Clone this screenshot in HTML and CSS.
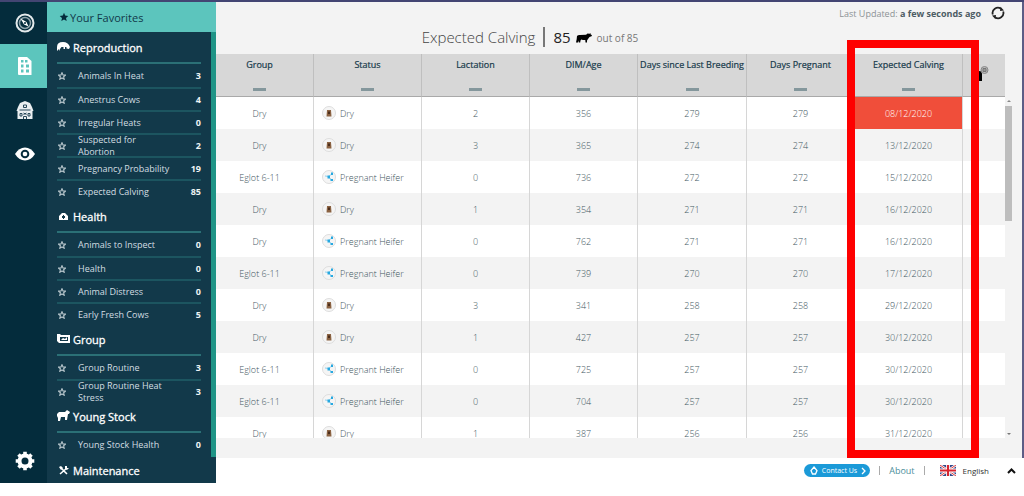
FILE: index.html
```html
<!DOCTYPE html>
<html lang="en">
<head>
<meta charset="utf-8">
<title>Expected Calving</title>
<link rel="stylesheet" href="styles.css">
</head>
<body>
<svg class="defs" aria-hidden="true">
  <symbol id="cow" viewBox="0 0 16 10"><path d="M1 3Q2 1.800 4 2L10 1.800L12 .3L13 1L14.500 0L14.500 1.300L16 2.300L15.500 3.300L13.500 4L12 6L11 7.500V9.500H9.500L9.300 7Q7.500 7.300 5.300 6.500L4.500 7.500L4.200 9.500H2.800L2.700 7.500L2 9.500H0L.7 6Z"/></symbol>
  <symbol id="star" viewBox="0 0 10 10"><path d="M5 .8L6.200 3.600L9.300 3.900L7 5.900L7.700 9L5 7.400L2.300 9L3 5.900L.7 3.900L3.800 3.600Z"/></symbol>
</svg>
<div class="app">
  <nav class="rail" aria-label="Main">
    <button class="rail-btn" aria-label="Dashboard"><svg width="20" height="20" viewBox="0 0 20 20"><circle cx="10" cy="10" r="8.500" fill="none" stroke="#e4eaec" stroke-width="2"/><circle cx="10" cy="10" r="5.500" fill="none" stroke="#8ea2aa" stroke-width="1.500"/><path d="M5.500 5.500L11.500 9L13.500 13.500L9 11.500Z" fill="#fff"/><circle cx="10" cy="10" r="1" fill="#042c3c"/></svg></button>
    <button class="rail-btn active" aria-label="Reports"><svg width="14" height="20" viewBox="0 0 14 20"><path d="M1 1H9L13.500 5V19H1Q0 19 0 18V2Q0 1 1 1Z" fill="#fff"/><path d="M3 4H5.500V6.500H3ZM7 4H9.500V6.500H7ZM3 8.500H5.500V11.500H3ZM8 8.500H11V11.500H8ZM3 13.500H5.500V16.500H3ZM8 13.500H11V16.500H8Z" fill="#5cc5bd"/></svg></button>
    <button class="rail-btn" aria-label="Farm"><svg width="18" height="20" viewBox="0 0 18 20"><path d="M9 1L14 3L16 7L17.500 11H16.500V19H1.500V11H.5L2 7L4 3Z" fill="#e9eef0"/><path d="M7.500 5H10.500V7.500H7.500Z M3.500 10H14.500M4 13.500H6V16H4ZM12 13.500H14V16H12ZM7.500 19V16.500H10.500V19M7.500 13L10.500 14.500M10.500 13L7.500 14.500" fill="none" stroke="#28485a" stroke-width="1"/></svg></button>
    <button class="rail-btn" aria-label="View"><svg width="20" height="14" viewBox="0 0 20 14"><path d="M0 7Q4 .5 10 .5T20 7Q16 13.500 10 13.500T0 7Z" fill="#fff"/><circle cx="10" cy="7" r="4.300" fill="#042c3c"/><circle cx="10" cy="7" r="2.300" fill="#fff"/></svg></button>
    <button class="rail-btn settings" aria-label="Settings"><svg width="20" height="20" viewBox="0 0 20 20"><circle cx="10" cy="10" r="5.500" fill="none" stroke="#fff" stroke-width="4"/><path d="M10 .7V4M10 16V19.300M.7 10H4M16 10H19.300M3.500 3.500L5.700 5.700M14.300 14.300L16.500 16.500M3.500 16.500L5.700 14.300M14.300 5.700L16.500 3.500" stroke="#fff" stroke-width="3.600"/></svg></button>
  </nav>
  <aside class="panel">
    <h2 class="favorites"><svg class="fav-star"><use href="#star"/></svg>Your Favorites</h2>
    <div class="sections" id="sections"></div>
  </aside>
  <main class="main">
    <div class="content">
      <div class="updated"><span>Last Updated: <b>a few seconds ago</b></span>
        <button class="refresh" aria-label="Refresh"><svg width="14" height="14" viewBox="0 0 14 14"><path d="M1.800 8.500A5.300 5.300 0 0 1 10 2.700M12.200 5.500A5.300 5.300 0 0 1 4 11.300" fill="none" stroke="#222" stroke-width="1.800"/><path d="M9.500 .8L13 4.500L9 5ZM4.500 13.200L1 9.500L5 9Z" fill="#222"/></svg></button></div>
      <h1 class="title"><span class="name">Expected Calving</span><span class="count">85</span><svg class="title-cow"><use href="#cow"/></svg><span class="total">out of 85</span></h1>
      <div class="grid">
        <div class="scroller">
          <table>
            <colgroup><col class="c-group"><col class="c-data"><col class="c-data"><col class="c-data"><col class="c-wide"><col class="c-data"><col class="c-data"><col class="c-tag"></colgroup>
            <thead><tr><th>Group</th><th>Status</th><th>Lactation</th><th>DIM/Age</th><th>Days since Last Breeding</th><th>Days Pregnant</th><th>Expected Calving</th><th class="tag"><svg width="20" height="18" viewBox="0 0 20 18"><path d="M3 7Q7 4 10 6Q13 6 13 9V16H10V10L7 9L4 12Z" fill="#000"/><circle cx="15.500" cy="5" r="3.500" fill="#bbb" stroke="#888"/><path d="M14 3.500H17V6.500H14ZM14 5H17" fill="none" stroke="#777"/></svg></th></tr></thead>
            <tbody id="rows"></tbody>
          </table>
        </div>
        <div class="scrollbar"><i class="up"></i><i class="thumb"></i><i class="down"></i></div>
      </div>
      <div class="highlight"></div>
    </div>
    <footer class="footer">
      <button class="contact"><svg width="8" height="9" viewBox="0 0 8 9"><path d="M4 1L7 4.500L5.500 8H2.500L1 4.500Z" fill="none" stroke="#fff" stroke-width="1.300"/></svg>Contact Us<svg width="5" height="8" viewBox="0 0 5 8"><path d="M1 1L4 4L1 7" fill="none" stroke="#fff" stroke-width="1.300"/></svg></button>
      <span class="bar"></span><a class="about" href="#">About</a><span class="bar"></span>
      <button class="lang"><svg width="16" height="11" viewBox="0 0 17 11" preserveAspectRatio="none"><path d="M0 0H17V11H0Z" fill="#34488a"/><path d="M0 0L17 11M17 0L0 11" stroke="#fff" stroke-width="2.400"/><path d="M0 0L17 11M17 0L0 11" stroke="#d33" stroke-width="1"/><path d="M8.500 0V11M0 5.500H17" stroke="#fff" stroke-width="4"/><path d="M8.500 0V11M0 5.500H17" stroke="#d8232f" stroke-width="2.200"/></svg>English</button>
      <button class="expand" aria-label="Expand"><svg width="9" height="6" viewBox="0 0 9 6"><path d="M1 5L4.500 1.500L8 5" fill="none" stroke="#111" stroke-width="2"/></svg></button>
    </footer>
  </main>
</div>
<script src="app.js"></script>
</body>
</html>
```
FILE: styles.css
```css
* { box-sizing: border-box; }
body { margin: 0; background: #fff; font-family: "Open Sans", "Noto Sans", sans-serif; font-size: 9px; color: #3f5761; }
button { border: 0; padding: 0; background: none; font: inherit; color: inherit; display: flex; align-items: center; }
h1, h2, h3, ul { margin: 0; padding: 0; font-weight: 400; }
svg { flex: none; }
.defs { position: absolute; width: 0; height: 0; }
.app { display: flex; height: 100vh; min-height: 320px; padding-bottom: 13px; border-top: 2px solid #434573; }

.rail { width: 47px; flex: none; background: #042c3c; display: flex; flex-direction: column; }
.rail-btn { width: 100%; height: 44px; justify-content: center; padding-left: 2px; }
.rail-btn:first-child { height: 42px; }
.rail-btn.active { background: #5cc5bd; }
.rail-btn.settings { margin-top: auto; }

.panel { width: 169px; flex: none; background: #12394a; display: flex; flex-direction: column; overflow: hidden; color: #d3dee2; }
.favorites { height: 30px; flex: none; padding-left: 12px; background: #5cc5bd; color: #12394a; font-size: 11px; display: flex; align-items: center; gap: 1px; }
.fav-star { width: 10px; height: 10px; fill: #042c3c; }
.sections { padding: 1px 10px 0; position: relative; flex: 1; min-height: 0; }
.sections::after { content: ""; position: absolute; right: 0; top: 0; bottom: 26px; width: 5px; background: #1f9486; }
.section h3 { height: 31px; display: flex; align-items: center; gap: 3px; border-bottom: 2px solid #2b7076; font-size: 11px; color: #fff; -webkit-text-stroke: 0.3px #fff; }
.section ul, .section h3 { width: 144px; }
.section ul { list-style: none; }
.section li { height: 23px; display: flex; align-items: center; border-top: 2px solid #1c5560; line-height: 12px; }
.section li:first-child { border-top: 0; }
.sec-icon { width: 13px; height: 13px; fill: #fff; }
.star { width: 8px; height: 8px; margin: 0 12px 0 1px; fill: none; stroke: #b4c3c9; stroke-width: 1.4px; }
.label { flex: 1; padding-right: 32px; }
.label.long { padding-right: 12px; }
.num { font-weight: 700; color: #eef3f4; }

.main { flex: 1; min-width: 0; display: flex; flex-direction: column; }
.content { flex: 1; min-height: 0; position: relative; display: flex; flex-direction: column; background: #f3f3f3; border-right: 2px solid #5c5d86; padding-bottom: 20px; }
.updated { display: flex; justify-content: flex-end; align-items: center; gap: 10px; height: 22px; padding-right: 17px; color: #8c9295; }
.updated b { color: #4c5c64; }
.title { display: flex; justify-content: center; align-items: center; height: 30px; padding-bottom: 4px; margin-right: 178px; font-size: 15px; color: #444; }
.name { font-weight: 300; }
.count { margin-left: 8px; padding-left: 8px; border-left: 2px solid #777; line-height: 20px; color: #222; }
.title-cow { width: 16px; height: 10px; margin: 2px 5px 0 5px; fill: #000; }
.total { font-size: 10px; color: #777; padding-top: 2px; }
.grid { flex: 1; min-height: 0; display: flex; padding-right: 10px; }
.scroller { flex: 1; min-width: 0; overflow: hidden; }
table { width: 100%; table-layout: fixed; border-collapse: separate; border-spacing: 0; }
.c-group { width: 98px; }
.c-data { width: 108px; }
.c-wide { width: 109px; }
.c-tag { width: 42px; }
th { height: 43px; padding: 4px 0 0; vertical-align: top; background: #d7d7d7; border-bottom: 1px solid #a9a9a9; border-right: 1px solid #bfbfbf; font-weight: 400; line-height: 14px; color: #16394a; white-space: nowrap; -webkit-text-stroke: 0.2px #16394a; }
th::after { content: ""; display: block; width: 13px; height: 3px; margin: 16px auto 0; background: #84979c; }
th.tag { padding: 11px 0 0 6px; text-align: left; }
th.tag::after { display: none; }
th:last-child, td:last-child { border-right: 0; }
td { height: 32px; padding: 0; text-align: center; background: #fff; border-right: 1px solid #d6d6d6; font-weight: 300; }
th:first-child, td:first-child { padding-right: 10px; }
tr:nth-child(even) td { background: #f3f3f3; }
tbody .due { background: #f04e3a; color: #fff; }
.status { display: flex; align-items: center; gap: 4px; padding-left: 8px; }
.scrollbar { width: 7px; flex: none; display: flex; flex-direction: column; align-items: center; padding: 46px 0 3px; }
.thumb { width: 7px; height: 115px; margin-top: 4px; background: #bdbdbd; }
.up, .down { border: 2px solid transparent; border-top: 0; border-bottom: 2px solid #888; }
.down { margin-top: auto; border-top: 2px solid #777; border-bottom: 0; }
.highlight { position: absolute; top: 38px; right: 43px; bottom: 0; width: 132px; border: 8px solid #fe0000; }

.footer { height: 25px; flex: none; display: flex; align-items: center; justify-content: flex-end; padding-right: 8px; }
.contact { height: 13px; padding: 0 4px 0 6px; gap: 4px; border-radius: 7px; background: #1b9ad8; color: #fff; font-size: 7px; }
.bar { width: 1px; height: 9px; margin: 0 9px; background: #aaa; }
.about { color: #4b8e9b; text-decoration: none; }
.lang { gap: 7px; margin: 0 18px 0 6px; font-size: 8px; color: #333; }
```
FILE: app.js
```js
const sections = [
  ["Reproduction", '<path d="M0 10V6Q0 1 6 1Q11 1 13 6L12 8L9.500 7.500V6H8V8H6.500V6H4.500L3 8V10L2 8Z"/>', [["Animals In Heat", 3], ["Anestrus Cows", 4], ["Irregular Heats", 0], ["Suspected for Abortion", 2], ["Pregnancy Probability", 19], ["Expected Calving", 85]]],
  ["Health", '<path fill-rule="evenodd" d="M2 10V6L5 3H8L11 6V10ZM6 5V6H5V8H6V9H7V8H8V6H7V5Z"/>', [["Animals to Inspect", 0], ["Health", 0], ["Animal Distress", 0], ["Early Fresh Cows", 5]]],
  ["Group", '<path fill-rule="evenodd" d="M0 1H3L4 2H13V10H2L0 8ZM3 4V8H11V4Z"/><path d="M4 7L6 5L8 6L10 4V7Z"/>', [["Group Routine", 3], ["Group Routine Heat Stress", 3]]],
  ["Young Stock", '<path d="M0 4L2 2H8L10 0L13 2L12 4H11L10 10H8V7H4L3 11H1V6L0 8Z"/>', [["Young Stock Health", 0]]],
  ["Maintenance", '<path d="M3 10L10 4M4 4L10 10" stroke="#fff" stroke-width="1.600"/><path d="M2 3L4 2L6 4L4 6ZM8 2H10V4H12L10 6L8 5Z"/>', []]
];
document.getElementById("sections").innerHTML = sections.map(([name, icon, items]) =>
  `<section class="section"><h3><svg class="sec-icon" viewBox="0 0 13 13">${icon}</svg>${name}</h3><ul>` +
  items.map(([label, n]) => `<li><svg class="star"><use href="#star" width="8" height="8"/></svg><span class="label${label.includes("Prob") || label.includes("Routine Heat") ? " long" : ""}">${label}</span><span class="num">${n}</span></li>`).join("") +
  "</ul></section>").join("");

const dryIcon = '<svg width="14" height="14" viewBox="0 0 14 14"><circle cx="7" cy="7" r="6.500" fill="#f5f5f5" stroke="#ddd"/><path d="M5 4H9L9.500 10.500H4.500Z" fill="#8a6242"/><path d="M6 5.500H8V8H6Z" fill="#4b2d1b"/></svg>';
const heiferIcon = '<svg width="14" height="14" viewBox="0 0 14 14"><circle cx="7" cy="7" r="6.500" fill="#f5f5f5" stroke="#ddd"/><path d="M3 6L7 6.500L10 3.500M7 7L10 10.500" stroke="#8fd0ee" fill="none"/><path d="M9 2.500H11V5H9ZM5.500 5.500H8V8.500H5.500ZM8.500 9H11V11H8.500Z" fill="#27a8e0"/></svg>';
const D = "Dry", P = "Pregnant Heifer", E = "Eglot 6-11";
const rows = [
  [D, D, 2, 356, 279, "08/12/2020"], [D, D, 3, 365, 274, "13/12/2020"], [E, P, 0, 736, 272, "15/12/2020"],
  [D, D, 1, 354, 271, "16/12/2020"], [D, P, 0, 762, 271, "16/12/2020"], [E, P, 0, 739, 270, "17/12/2020"],
  [D, D, 3, 341, 258, "29/12/2020"], [D, D, 1, 427, 257, "30/12/2020"], [E, P, 0, 725, 257, "30/12/2020"],
  [E, P, 0, 704, 257, "30/12/2020"], [D, D, 1, 387, 256, "31/12/2020"]
];
document.getElementById("rows").innerHTML = rows.map(([g, s, l, a, d, c], i) =>
  `<tr><td>${g}</td><td><div class="status">${s === D ? dryIcon : heiferIcon}${s}</div></td><td>${l}</td><td>${a}</td><td>${d}</td><td>${d}</td><td${i ? "" : ' class="due"'}>${c}</td><td></td></tr>`).join("");
```
